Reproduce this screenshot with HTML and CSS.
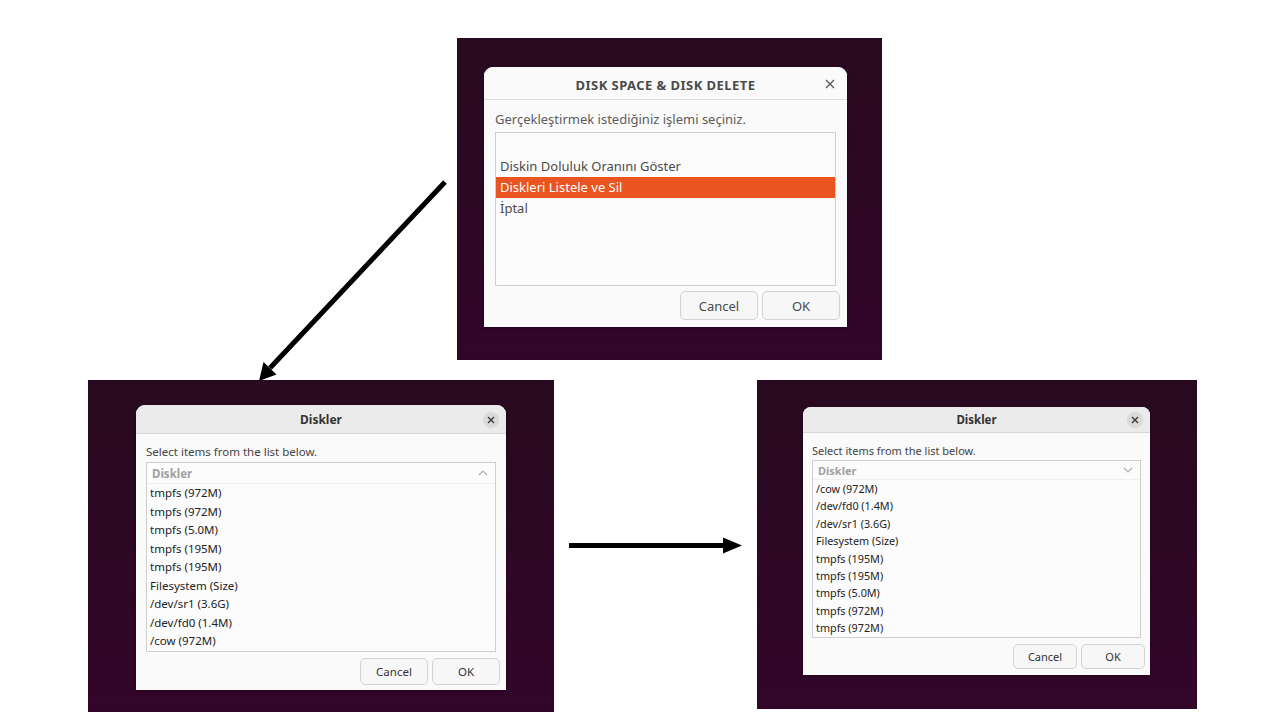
FILE: index.html
```html
<!DOCTYPE html>
<html lang="tr">
<head>
<meta charset="utf-8">
<title>Disk Space & Disk Delete</title>
<link rel="stylesheet" href="styles.css">
</head>
<body>
<div class="canvas">

  <section class="shot shot-top">
    <div class="dlg dlg-a">
      <header class="hd hd-a">
        <span class="title title-a">DISK SPACE &amp; DISK DELETE</span>
        <span class="x-plain">
          <svg width="10" height="10" viewBox="0 0 10 10"><path d="M1 1L9 9M9 1L1 9" stroke="#5a5a5a" stroke-width="1.4"/></svg>
        </span>
      </header>
      <div class="bd bd-a">
        <p class="lbl lbl-a">Gerçekleştirmek istediğiniz işlemi seçiniz.</p>
        <div class="list list-a">
          <div class="blank-a"></div>
          <div class="row-a">Diskin Doluluk Oranını Göster</div>
          <div class="row-a sel">Diskleri Listele ve Sil</div>
          <div class="row-a">İptal</div>
        </div>
        <div class="btns btns-a">
          <button class="btn btn-a">Cancel</button>
          <button class="btn btn-a">OK</button>
        </div>
      </div>
    </div>
  </section>

  <section class="shot shot-left">
    <div class="dlg dlg-b">
      <header class="hd hd-b">
        <span class="title title-b">Diskler</span>
        <span class="x-round x-b">
          <svg width="8" height="8" viewBox="0 0 8 8"><path d="M1 1L7 7M7 1L1 7" stroke="#3a3a3a" stroke-width="1.4"/></svg>
        </span>
      </header>
      <div class="bd bd-b">
        <p class="lbl lbl-b">Select items from the list below.</p>
        <div class="list list-b">
          <div class="colhd colhd-b">
            <span>Diskler</span>
            <svg width="10" height="6" viewBox="0 0 10 6"><path d="M1 5L5 1L9 5" fill="none" stroke="#b0b0b0" stroke-width="1.2"/></svg>
          </div>
          <div class="row-b">tmpfs (972M)</div>
          <div class="row-b">tmpfs (972M)</div>
          <div class="row-b">tmpfs (5.0M)</div>
          <div class="row-b">tmpfs (195M)</div>
          <div class="row-b">tmpfs (195M)</div>
          <div class="row-b">Filesystem (Size)</div>
          <div class="row-b">/dev/sr1 (3.6G)</div>
          <div class="row-b">/dev/fd0 (1.4M)</div>
          <div class="row-b">/cow (972M)</div>
        </div>
        <div class="btns btns-b">
          <button class="btn btn-b">Cancel</button>
          <button class="btn btn-b">OK</button>
        </div>
      </div>
    </div>
  </section>

  <section class="shot shot-right">
    <div class="dlg dlg-c">
      <header class="hd hd-c">
        <span class="title title-c">Diskler</span>
        <span class="x-round x-c">
          <svg width="8" height="8" viewBox="0 0 8 8"><path d="M1 1L7 7M7 1L1 7" stroke="#3a3a3a" stroke-width="1.4"/></svg>
        </span>
      </header>
      <div class="bd bd-c">
        <p class="lbl lbl-c">Select items from the list below.</p>
        <div class="list list-c">
          <div class="colhd colhd-c">
            <span>Diskler</span>
            <svg width="10" height="6" viewBox="0 0 10 6"><path d="M1 1L5 5L9 1" fill="none" stroke="#b0b0b0" stroke-width="1.2"/></svg>
          </div>
          <div class="row-c">/cow (972M)</div>
          <div class="row-c">/dev/fd0 (1.4M)</div>
          <div class="row-c">/dev/sr1 (3.6G)</div>
          <div class="row-c">Filesystem (Size)</div>
          <div class="row-c">tmpfs (195M)</div>
          <div class="row-c">tmpfs (195M)</div>
          <div class="row-c">tmpfs (5.0M)</div>
          <div class="row-c">tmpfs (972M)</div>
          <div class="row-c">tmpfs (972M)</div>
        </div>
        <div class="btns btns-c">
          <button class="btn btn-c">Cancel</button>
          <button class="btn btn-c">OK</button>
        </div>
      </div>
    </div>
  </section>

  <svg class="arrows" width="1280" height="720" viewBox="0 0 1280 720">
    <line x1="445" y1="182" x2="270" y2="368" stroke="#000" stroke-width="5"/>
    <polygon points="259,381 276.5,374.5 263.5,362" fill="#000"/>
    <line x1="569" y1="545.5" x2="724" y2="545.5" stroke="#000" stroke-width="5"/>
    <polygon points="723,537.5 742,545.5 723,553.5" fill="#000"/>
  </svg>
</div>
</body>
</html>
```

FILE: styles.css
```css
* { box-sizing: border-box; }

html, body {
  margin: 0;
  padding: 0;
  background: #ffffff;
}

body {
  font-family: "Noto Sans", "DejaVu Sans", sans-serif;
  color: #333;
}

.canvas {
  position: relative;
  width: 1280px;
  height: 720px;
  overflow: hidden;
}

/* screenshot panels placed on the slide canvas */
.shot {
  position: absolute;
  background: linear-gradient(180deg, #290a20 0%, #2d0823 50%, #33052a 100%);
}

.shot-top   { left: 457px; top: 38px;  width: 425px; height: 322px; padding: 29px 0 0 27px; }
.shot-left  { left: 88px;  top: 380px; width: 466px; height: 332px; padding: 25px 0 0 48px; }
.shot-right { left: 757px; top: 380px; width: 440px; height: 329px; padding: 27px 0 0 46px; }

.arrows {
  position: absolute;
  left: 0;
  top: 0;
  pointer-events: none;
}

/* dialogs */
.dlg {
  display: flex;
  flex-direction: column;
  background: #fafafa;
  border-radius: 9px 9px 0 0;
  overflow: hidden;
  box-shadow: 0 1px 3px rgba(0,0,0,0.35);
}
.dlg-a { width: 363px; height: 260px; }
.dlg-b { width: 370px; height: 285px; }
.dlg-c { width: 347px; height: 268px; border-radius: 8px 8px 0 0; }

.hd {
  position: relative;
  display: flex;
  align-items: center;
  justify-content: center;
  flex: none;
}
.hd-a { height: 33px; background: #fafafa; border-bottom: 1px solid #dedede; }
.hd-b { height: 29px; background: #ebebeb; border-bottom: 1px solid #d6d6d6; }
.hd-c { height: 26px; background: #ebebeb; border-bottom: 1px solid #d6d6d6; }

.title { font-weight: 700; }
.title-a { font-size: 13px; color: #4a4a4a; letter-spacing: 0.45px; padding-top: 3px; }
.title-b { font-size: 12px; color: #333; }
.title-c { font-size: 11.5px; color: #333; }

.x-plain {
  position: absolute;
  right: 12px;
  top: 12px;
  display: flex;
}
.x-round {
  position: absolute;
  display: flex;
  align-items: center;
  justify-content: center;
  width: 16px;
  height: 16px;
  border-radius: 50%;
  background: #dadada;
}
.x-b { right: 7px; top: 7px; }
.x-c { right: 7px; top: 5px; }

.bd {
  flex: 1;
  display: flex;
  flex-direction: column;
  min-height: 0;
}
.bd-a { padding: 10px 7px 7px 11px; }
.bd-b { padding: 8px 6px 5px 10px; }
.bd-c { padding: 8px 5px 6px 9px; }

.lbl { margin: 0; }
.lbl-a { font-size: 13px; color: #5c5c5c; height: 22px; line-height: 18px; }
.lbl-b { font-size: 11.5px; color: #444; height: 20px; line-height: 20px; }
.lbl-c { font-size: 11px; color: #444; height: 19px; line-height: 19px; }

.list {
  background: #fcfcfc;
  border: 1px solid #cfcfcf;
}
.list-a { width: 341px; height: 154px; padding: 2px 0 0 0; }
.list-b { width: 350px; height: 190px; }
.list-c { width: 329px; height: 178px; }

.blank-a { height: 21px; }
.row-a {
  height: 21px;
  line-height: 21px;
  padding-left: 4px;
  font-size: 13px;
  color: #4a4a4a;
}
.row-a.sel { background: #e95420; color: #fff; }

.colhd {
  display: flex;
  align-items: center;
  justify-content: space-between;
  font-weight: 700;
  color: #a0a0a0;
  border-bottom: 1px solid #f0f0f0;
}
.colhd-b { height: 21px; padding: 0 7px 0 5px; font-size: 11.5px; }
.colhd-c { height: 19px; padding: 0 7px 0 5px; font-size: 11px; }

.row-b {
  height: 18.5px;
  line-height: 18.5px;
  padding-left: 3px;
  font-size: 11.5px;
  color: #222;
}
.row-c {
  height: 17.4px;
  line-height: 17.4px;
  padding-left: 3px;
  font-size: 10.8px;
  color: #222;
}

.btns {
  display: flex;
  justify-content: flex-end;
  margin-top: auto;
}
.btns-a { gap: 4px; }
.btns-b { gap: 4px; }
.btns-c { gap: 4px; }

.btn {
  font-family: inherit;
  background: #f7f7f7;
  border: 1px solid #d3d3d3;
  border-radius: 5px;
  color: #4a4a4a;
  padding: 0;
}
.btn-a { width: 78px; height: 29px; font-size: 13px; }
.btn-b { width: 68px; height: 27px; font-size: 11.5px; color: #333; }
.btn-c { width: 64px; height: 25px; font-size: 11px; color: #333; }
```
